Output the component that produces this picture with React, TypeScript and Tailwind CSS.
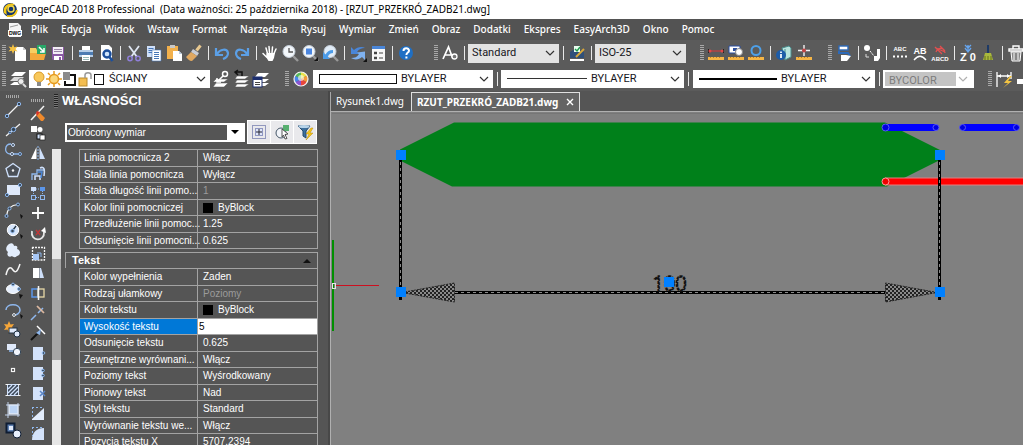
import type { ReactNode } from 'react';

const white = '#f4f4f4';
const sky = '#8fb8ee';
const ice = '#cfe0fa';

const icons: Record<string, ReactNode> = {
  new: (
    <>
      <path d="M7 4h8l3 3v11H7z" fill="#fff" />
      <path d="M15 4v3h3" fill="#c9c9c9" />
      <path d="M5 1l1.200 3.200L9.500 3.500 7.500 6l2 2.500-3.300-.7L5 11 3.800 7.800.5 8.500l2-2.500-2-2.500 3.300.7z" fill="#f6c344" />
    </>
  ),
  open: (
    <>
      <path d="M2 5h6l1 2h6v10H2z" fill="#f7cf62" />
      <path d="M2 10h16l-2 7H2z" fill="#f3a93c" />
      <rect x="9" y="2" width="9" height="9" fill="#28a869" />
      <path d="M11 4l5 5m0-4v4h-4" stroke="#fff" strokeWidth="1.500" fill="none" />
    </>
  ),
  save: (
    <>
      <path d="M4 4h12v13H5l-1-1z" fill="#8b5aa5" />
      <rect x="5" y="4" width="10" height="7" fill="#f3eef6" />
      <path d="M6 6.500h8M6 8.500h8" stroke="#9a86a8" />
      <rect x="6" y="13" width="8" height="4" fill="#fff" />
      <rect x="11" y="14" width="2" height="3" fill="#8b5aa5" />
    </>
  ),
  print: (
    <>
      <path d="M6 3h8v5H6z" fill="#fff" />
      <path d="M3 7h14v7H3z" fill="#b8cfe8" />
      <path d="M3 9h14v3H3z" fill="#4d7cb3" />
      <path d="M6 12h8v6H6z" fill="#fff" />
      <path d="M7 14.500h6M7 16.500h6" stroke="#9bb" />
    </>
  ),
  preview: (
    <>
      <path d="M5 2h8l3 3v12H5z" fill="#fff" />
      <circle cx="11" cy="11" r="3.500" fill="#cfe4fb" stroke="#1c4f9c" strokeWidth="2.400" />
      <path d="M13.500 14l3 4" stroke="#1c4f9c" strokeWidth="2.600" />
    </>
  ),
  cut: (
    <>
      <path d="M5 3l8 11M15 3L7 14" stroke="#dfe6f2" strokeWidth="1.800" />
      <circle cx="6" cy="15.500" r="2.200" fill="none" stroke="#8f7fd8" strokeWidth="1.500" />
      <circle cx="14" cy="15.500" r="2.200" fill="none" stroke="#8f7fd8" strokeWidth="1.500" />
    </>
  ),
  copy: (
    <>
      <path d="M3 3h8v11H3z" fill={ice} />
      <path d="M4.500 5.500h5M4.500 7.500h5M4.500 9.500h5" stroke="#4676b8" />
      <path d="M8 7h9v11H8z" fill="#fff" stroke="#4676b8" strokeWidth=".6" />
      <path d="M10 9.500h5M10 11.500h5M10 13.500h5M10 15.500h5" stroke="#4676b8" />
    </>
  ),
  paste: (
    <>
      <rect x="3" y="3" width="11" height="13" fill="#f2b04c" />
      <rect x="6" y="2" width="5" height="3" fill="#c9c9c9" />
      <path d="M9 8h6l3 3v7H9z" fill="#fff" />
      <path d="M15 8v3h3" fill="#b9c9dd" />
    </>
  ),
  match: (
    <>
      <path d="M16.500 2.500l-4 5" stroke="#e8c890" strokeWidth="3" />
      <path d="M9 6l6 4-2 3-6-4z" fill="#c9ccd4" />
      <path d="M7 9l6 4-5 5c-3 0-4-2-6-4z" fill="#e0a860" />
    </>
  ),
  undo: <path d="M4 5v7h7M5 11c3-5 10-6 11-1 0 3-2 5-5 6" stroke="#5b9fe6" strokeWidth="2.200" fill="none" />,
  redo: <path d="M16 5v7H9m6-1c-3-5-10-6-11-1 0 3 2 5 5 6" stroke="#5b9fe6" strokeWidth="2.200" fill="none" />,
  pan: (
    <>
      <path
        d="M6.500 14L3 10.500m4.500 0L6 5m3.500 5L9 3.500m3 6.500l.5-6M14 10.500L16 6"
        stroke="#fff"
        strokeWidth="1.500"
        strokeLinecap="round"
        fill="none"
      />
      <path d="M6.500 10h8.500l-1 5-1.500 3h-4L6 14z" fill="#fff" />
    </>
  ),
  zoomPrev: (
    <>
      <path d="M13 13l5 5" stroke="#999" strokeWidth="2.400" />
      <circle cx="9" cy="8.500" r="6" fill="#f3f7fb" stroke="#c4cdd8" />
      <path d="M9 5v4h4" stroke="#555" fill="none" strokeWidth="1.300" />
    </>
  ),
  zoomWin: (
    <>
      <path d="M13 13l5 5" stroke="#999" strokeWidth="2.400" />
      <circle cx="9" cy="8.500" r="6" fill="#f3f7fb" stroke="#c4cdd8" />
      <rect x="6" y="5.500" width="6" height="6" fill="#4b86e0" />
      <path d="M18 14v4h-4z" fill="#111" />
    </>
  ),
  zoomExt: (
    <>
      <path d="M13 13l5 5" stroke="#999" strokeWidth="2.400" />
      <circle cx="10" cy="8.500" r="6" fill="#e2edf8" stroke="#c4cdd8" />
      <path d="M3 9v7h7l-2.200-2.200C9 11 11 10 13 10V7c-4 0-6 2-7.500 4.500z" fill="#4b9be8" />
    </>
  ),
  regen: (
    <>
      <path d="M3 4l3 3c3-3 8-4 11-2-4 0-6 1-8 4l3 2H3z" fill="#4a86d8" />
      <path d="M17 17l-3-3c-3 3-8 3-11 1 4 0 6-1 8-4L9 9.500l8-1z" fill="#7fb2f0" />
      <path d="M19 15v4h-4z" fill="#111" />
    </>
  ),
  props: (
    <>
      <rect x="4" y="3" width="13" height="15" fill="#f7f7f7" />
      <rect x="4" y="3" width="13" height="3" fill="#4a86d8" />
      <path d="M6 10h3M6 15h3" stroke="#444" strokeWidth="2.400" />
      <path d="M11 10h4M11 15h4" stroke="#444" strokeWidth="1.200" />
    </>
  ),
  help: (
    <>
      <circle cx="10" cy="10" r="7" fill="#1f6fc4" />
      <path d="M7.500 8c0-3.500 5.500-3.500 5.500-.3 0 2-2.600 1.800-2.600 4.300m0 1.500v2" stroke="#fff" strokeWidth="2" fill="none" />
    </>
  ),
  textStyle: (
    <>
      <path d="M3 16L8.500 4l4.500 12M5 12h6" stroke="#fff" strokeWidth="1.700" fill="none" />
      <circle cx="14.500" cy="13.500" r="2.500" fill="#777" stroke="#fff" strokeWidth="1.300" />
    </>
  ),
  dimStyle: (
    <>
      <path d="M3 9l3-2h9l2 2v6H3z" fill="#30507a" />
      <rect x="7" y="3" width="6" height="6" fill="#e8fff0" />
      <path d="M8 6l2 2 3-4" stroke="#1f9a4c" fill="none" strokeWidth="1.400" />
      <path d="M9 14l8-8" stroke="#d9a83a" strokeWidth="2" />
      <rect x="3" y="16" width="14" height="2" fill="#fff" />
    </>
  ),
  dist: (
    <>
      <path d="M3 8h14" stroke="#c04040" strokeWidth="1.300" />
      <path d="M2.500 6v4M17.500 6v4" stroke="#222" />
      <circle cx="4" cy="8" r="1.500" fill="#e04848" />
      <circle cx="16" cy="8" r="1.500" fill="#e04848" />
      <path d="M2 14h16v3H2z" fill="#f6b545" />
      <path d="M4.500 14v1m3-1v1m3-1v1m3-1v1" stroke="#a06a10" strokeWidth=".7" />
    </>
  ),
  area: (
    <>
      <path d="M3 3h11v7H3z" fill="#fff" stroke="#2b4fa0" />
      <rect x="7" y="5" width="4" height="3" fill="#2b4fa0" />
      <circle cx="13" cy="9" r="3.500" fill="#fff" stroke="#888" />
      <path d="M2 14h16v3H2z" fill="#f6b545" />
      <path d="M4.500 14v1m3-1v1m3-1v1m3-1v1" stroke="#a06a10" strokeWidth=".7" />
    </>
  ),
  radius: (
    <>
      <circle cx="10" cy="7.500" r="4.500" fill="none" stroke="#4da0e8" strokeWidth="2" />
      <path d="M2 14h16v3H2z" fill="#f6b545" />
      <path d="M4.500 14v1m3-1v1m3-1v1m3-1v1" stroke="#a06a10" strokeWidth=".7" />
    </>
  ),
  mass: (
    <>
      <path d="M8 5l7-2 2 2v9l-6 3z" fill="#b9e4de" stroke="#4a8c8c" />
      <path d="M11 6v10" stroke="#4a8c8c" />
      <circle cx="7" cy="12" r="5" fill="#1d5ca8" />
      <path d="M7 8.500v1.500m0 1v4" stroke="#fff" strokeWidth="1.700" />
    </>
  ),
  coord: (
    <>
      <path d="M10 2v11M4 7.500h12" stroke="#f2f2f2" strokeWidth="1.400" />
      <circle cx="10" cy="7.500" r="2" fill="#c04444" />
      <path d="M2 14h16v3H2z" fill="#f6b545" />
      <path d="M4.500 14v1m3-1v1m3-1v1m3-1v1" stroke="#a06a10" strokeWidth=".7" />
    </>
  ),
  flow: (
    <>
      <rect x="5" y="3" width="9" height="4" fill="#fff" stroke="#2c69b8" strokeWidth="1.400" />
      <path d="M5 8v2h9l2 3" stroke="#2c69b8" strokeWidth="2" fill="none" />
      <path d="M7 12h5l5 1-4 5H7z" fill="#fff" />
    </>
  ),
  chain: (
    <>
      <circle cx="5" cy="5" r="3" fill="#fff" />
      <path d="M8 8l4 5" stroke="#fff" strokeDasharray="2 1" />
      <path d="M12 13h3V6h3v9l-2 3h-4z" fill="#fff" />
      <path d="M4 11v3h3" stroke="#ddd" fill="none" />
    </>
  ),
  abcDots: <path d="M3 13.500h14" stroke="#fff" strokeWidth="2" strokeDasharray="2 2" />,
  abArc: <path d="M4 17c4-5 8-5 12 0" stroke="#fff" strokeWidth="1.300" fill="none" />,
  abcd: <path d="M5 4l7 7m-2-8l5 5M6 9c2-5 8-5 9 1M6 5l9 4" stroke="#e05050" strokeWidth="1.300" fill="none" />,
  z0: <path d="M10 2v7M7 5l3 4 3-4M7 2l3 3 3-3" stroke="#66a6f0" strokeWidth="1.300" fill="none" />,
  purge: (
    <>
      <path d="M10 2v9" stroke="#1d3a66" strokeWidth="2" />
      <path d="M7 10h6l2 7H5z" fill="#a9b83c" />
      <path d="M7 17v-4m3 4v-4m3 4v-4" stroke="#64701c" />
    </>
  ),
  trash: (
    <>
      <path d="M3 6h14v2H3zM7 3h6v3H7z" fill="none" stroke="#fff" strokeWidth="1.400" />
      <path d="M5 9h10l-1 9H6z" fill="#888" stroke="#fff" />
      <path d="M8 10v7m4-7v7" stroke="#fff" />
    </>
  ),
  layers: (
    <>
      <path d="M7 3h11l-4 4H3z" fill="#fff" />
      <path d="M6 8h10l-4 4H2z" fill="#d9d9d9" />
      <path d="M6 13h8l-3 3H2z" fill="#fff" />
      <circle cx="13" cy="12.500" r="3" fill="#eee" stroke="#777" />
      <path d="M15 15l3 3" stroke="#ddd" strokeWidth="2" />
    </>
  ),
  layerPick: (
    <>
      <path d="M5 10h12l-4 3H2zM5 14h12l-4 4H2z" fill="#fff" stroke="#555" strokeWidth=".5" />
      <circle cx="14" cy="5" r="2.500" fill="none" stroke="#fff" strokeWidth="1.500" />
      <path d="M12 7l-6 6m0-4v4h4" stroke="#fff" strokeWidth="1.500" fill="none" />
    </>
  ),
  layerPrev: (
    <>
      <path d="M6 7h12l-4 3H4zM6 11h12l-4 3H4zM6 15h12l-4 3H4z" fill="#fff" stroke="#555" strokeWidth=".5" />
      <path d="M11 7V3H4m3-2L4 3l3 3" stroke="#111" strokeWidth="1.500" fill="none" />
    </>
  ),
  layerState: (
    <>
      <path d="M7 4h11l-4 4H4zM10 10h8l-4 3h-5zM10 14h8l-4 3h-5z" fill="#fff" />
      <rect x="2" y="8" width="9" height="10" fill="#fff" stroke="#1d2f70" />
      <rect x="2" y="8" width="9" height="3" fill="#1d2f70" />
      <path d="M4 13.500h5M4 15.500h5" stroke="#444" />
    </>
  ),
  wheel: (
    <>
      <path d="M10 10V3a7 7 0 016 3.500z" fill="#e9e04a" />
      <path d="M10 10l6-3.500a7 7 0 010 7z" fill="#f39a3a" />
      <path d="M10 10l6 3.500a7 7 0 01-6 3.500z" fill="#e8463c" />
      <path d="M10 10v7a7 7 0 01-6-3.500z" fill="#8a55d0" />
      <path d="M10 10l-6 3.500a7 7 0 010-7z" fill="#4a86e8" />
      <path d="M10 10L4 6.500A7 7 0 0110 3z" fill="#55b85a" />
      <circle cx="10" cy="10" r="7" fill="none" stroke="#f3f3f3" strokeWidth="1.200" />
      <circle cx="10" cy="9" r="3" fill="#fff" opacity=".6" />
    </>
  ),
  dimLinear: (
    <>
      <path d="M3 3v15M17 3v7M3 7h14" stroke="#fff" strokeWidth="1.300" />
      <path d="M4 7l3-2v4zM16 7l-3-2v4z" fill="#fff" />
      <path d="M16 7l-6 7h4l-5 5 9-7h-4l4-5z" fill="#f5c542" />
    </>
  ),
  dimNext: <path d="M3 10h14v5H3z" fill="#fff" />,
  line: (
    <>
      <path d="M4.500 15.500l11-11" stroke={white} strokeWidth="1.300" />
      <circle cx="4" cy="16" r="1.700" fill="#345" stroke={sky} />
      <circle cx="16" cy="4" r="1.700" fill="#345" stroke={sky} />
    </>
  ),
  xline: (
    <>
      <path d="M3 16L17 4" stroke={white} strokeWidth="1.200" />
      <circle cx="7" cy="12.500" r="1.200" fill="#345" stroke={sky} />
      <circle cx="10.500" cy="9.500" r="2.200" fill="#345" stroke={sky} />
    </>
  ),
  pline: (
    <>
      <path d="M8 4C1 4 1 14 7 14h10" stroke={sky} strokeWidth="1.300" fill="none" />
      <circle cx="10" cy="5" r="1.500" fill="#345" stroke={ice} />
      <circle cx="9" cy="14" r="1.500" fill="#345" stroke={ice} />
      <circle cx="17" cy="14" r="1.500" fill="#345" stroke={sky} />
    </>
  ),
  polygon: (
    <>
      <path d="M10 3.500l7 5-2.500 8h-9L3 8.500z" fill="#4a4f56" stroke={ice} strokeWidth="1.300" />
      <circle cx="10" cy="10.500" r="1.200" fill={white} />
    </>
  ),
  rect: (
    <>
      <rect x="4" y="5" width="13" height="10" fill="#dfe9fa" />
      <circle cx="4" cy="15" r="1.600" fill="#345" stroke={sky} />
      <circle cx="17" cy="5" r="1.600" fill="#345" stroke={sky} />
    </>
  ),
  arc: (
    <>
      <path d="M3.500 16C4 9 8 5 15 4.500" stroke={white} strokeWidth="1.200" fill="none" />
      <circle cx="3.500" cy="16" r="1.500" fill="#345" stroke={sky} />
      <circle cx="6.500" cy="8.500" r="1.500" fill="#345" stroke={sky} />
      <circle cx="15" cy="4.500" r="1.500" fill="#345" stroke={sky} />
      <path d="M17 14l3 2-2 3z" fill="#111" />
    </>
  ),
  circle: (
    <>
      <circle cx="10" cy="10" r="5.700" fill="#d7e6fb" stroke="#fff" />
      <path d="M10 10l3-4" stroke="#234" strokeWidth="1.300" />
      <circle cx="9.500" cy="11" r="1.800" fill="#345" stroke={sky} />
      <path d="M17 14l3 2-2 3z" fill="#111" />
    </>
  ),
  cloud: <path d="M6 4c3-2 5 0 5 2 3-1 4 1 3 3 4 1 4 6 0 7-2 2-4 1-5 0-3 2-6-1-4-4-3-2-2-6 1-8z" fill="#e3edfc" />,
  spline: <path d="M3 15c2-9 5-8 7-5s4 3 7-6" stroke={white} strokeWidth="1.500" fill="none" />,
  ellipse: (
    <>
      <ellipse cx="10" cy="9" rx="6.500" ry="4.500" fill="#e6effd" stroke="#fff" />
      <circle cx="16" cy="9" r="1.400" fill="#345" stroke={sky} />
      <circle cx="10" cy="4.500" r="1.400" fill="#345" stroke={sky} />
      <path d="M16 14l4 1-3 4z" fill="#111" />
    </>
  ),
  ellipseArc: (
    <>
      <path d="M3 10c0-7 14-7 14 0 0 3-3 5-6 5" stroke={sky} strokeWidth="1.500" fill="none" />
      <circle cx="11" cy="15" r="1.400" fill="#345" stroke={white} />
      <path d="M17 14l3 2-2 3z" fill="#111" />
    </>
  ),
  insert: (
    <>
      <path d="M6 1l1.500 3.500L11 4 9 7l2 3-3.500-.5L6 13l-1.500-3.500L1 10l2-3-2-3 3.500.5z" fill="#f5a63a" />
      <rect x="6" y="8" width="8" height="5" fill="#dfe9fa" stroke="#234" />
      <circle cx="14" cy="14" r="3" fill="#dfe9fa" stroke="#234" />
    </>
  ),
  block: (
    <>
      <rect x="4" y="4" width="9" height="6" fill="#dfe9fa" />
      <path d="M6 11h4" stroke={sky} strokeWidth="1.500" />
      <circle cx="14" cy="12" r="3.700" fill="#f1f5fc" stroke="#345" />
    </>
  ),
  point: <rect x="8.500" y="8.500" width="3" height="3" fill="#444" stroke={white} strokeWidth="1.200" />,
  hatch: (
    <>
      <rect x="4.500" y="4.500" width="11" height="11" fill="#3b4757" stroke={ice} />
      <path d="M5 9l4-4M5 13l8-8M7 15l8-8M11 15l4-4" stroke={ice} strokeWidth="1.300" />
      <path d="M2.500 4.500h3M14.500 4.500h3M2.500 15.500h3M14.500 15.500h3" stroke={white} />
    </>
  ),
  boundary: (
    <>
      <rect x="6" y="5" width="9" height="9" fill="#bcd4f5" stroke={white} />
      <path d="M5 2v16M2 15h15M15 3v14M3 5h14" stroke={ice} strokeWidth=".9" />
    </>
  ),
  region: (
    <>
      <rect x="3.500" y="3.500" width="8" height="9" fill="#5d7fb0" stroke="#0f1d33" strokeWidth="2" />
      <rect x="6" y="6" width="4" height="4" fill="#dfe9fa" />
      <circle cx="14" cy="14" r="4" fill="#e8f0fd" stroke="#0f1d33" />
    </>
  ),
  erase: (
    <>
      <path d="M3 17L16 3" stroke={white} strokeWidth="1.500" />
      <path d="M11 9l6 6-2 3h-2l-5-6z" fill="#f08a2c" />
      <path d="M9 8l3 1-3 4-1-3z" fill="#d8372a" />
    </>
  ),
  copyObj: (
    <>
      <rect x="3" y="3" width="6" height="6" fill="#fff" />
      <circle cx="12" cy="6.500" r="2.500" fill="#fff" />
      <rect x="9" y="11" width="5" height="5" fill={ice} stroke="#111" />
      <rect x="12" y="12" width="5" height="5" fill="#fff" stroke="#222" strokeWidth=".7" />
    </>
  ),
  mirror: (
    <>
      <path d="M8.500 4v12H3z" fill="#fff" />
      <path d="M11.500 4v12H17z" fill={ice} />
      <path d="M10 3v15" stroke={sky} strokeDasharray="2 1" />
    </>
  ),
  offset: (
    <>
      <path d="M4 17v-6h5V7h7" fill="none" stroke={sky} strokeWidth="1.300" />
      <path d="M7 17v-4h5v4M12 5c4-2 5 1 4 8" fill="none" stroke={ice} strokeWidth="1.600" />
      <path d="M10 9h4l-1 6" stroke="#4a86d8" strokeWidth="1.500" fill="none" />
    </>
  ),
  array: (
    <>
      <rect x="3" y="4" width="5" height="4" fill={ice} />
      <rect x="12" y="4" width="5" height="4" fill="#5b96ea" />
      <rect x="3.500" y="12.500" width="4" height="4" fill="none" stroke={sky} />
      <rect x="12.500" y="12.500" width="4" height="4" fill="none" stroke={sky} />
      <path d="M5.500 8v4M14.500 8v4M8 6h4M8 14.500h4" stroke={sky} strokeDasharray="1 1" />
    </>
  ),
  move: <path d="M10 4v12M4 10h12" stroke="#fff" strokeWidth="1.800" />,
  rotate: (
    <>
      <path d="M4 8c-2 11 13 11 12 1" fill="none" stroke="#e6e6e6" strokeWidth="1.800" />
      <path d="M13 8l4-4 1 6z" fill="#fff" />
      <path d="M8 7l4 5m0-5l-4 5" stroke="#c03838" strokeWidth="1.300" />
    </>
  ),
  scale: (
    <>
      <path d="M4 4.500h12.500V17" fill="none" stroke={white} strokeDasharray="2 1" strokeWidth="1.300" />
      <path d="M4.500 4v13H17" fill="none" stroke={white} strokeDasharray="2 1" strokeWidth="1.300" />
      <rect x="5" y="11" width="6" height="6" fill="#a8c8f6" />
      <path d="M9 10h4v4" fill="none" stroke={sky} />
    </>
  ),
  stretch: (
    <>
      <rect x="5" y="5" width="6" height="10" fill="#fff" />
      <path d="M11.500 5h1.500l3 10h-4.500z" fill={ice} />
    </>
  ),
  stretch2: (
    <>
      <rect x="4" y="6" width="6" height="8" fill="none" stroke="#5b96ea" strokeWidth="1.500" />
      <rect x="10" y="6" width="6" height="8" fill="none" stroke="#e8d9a8" strokeWidth="1.300" />
      <path d="M10.500 3v14" stroke={white} strokeWidth="1.500" />
    </>
  ),
  trim: (
    <>
      <path d="M3 17l5-5m2-2l5-5" stroke={sky} strokeWidth="1.500" />
      <path d="M9 3l7 7" stroke="#dcb8a0" strokeWidth="1.700" />
    </>
  ),
  extend: (
    <>
      <path d="M3 17l9-9" stroke="#111" strokeWidth="2" />
      <path d="M9 3l8 8" stroke="#fff" strokeWidth="1.500" />
      <path d="M8 10l5-4-1 6" fill={sky} />
    </>
  ),
  break1: (
    <>
      <path d="M5 4h10v13H5z" fill="#d3e2fa" />
      <circle cx="15.500" cy="10" r="1.300" fill="#345" stroke={sky} />
    </>
  ),
  break2: (
    <>
      <path d="M5 4h10v13H5z" fill="#d3e2fa" />
      <circle cx="15" cy="7.500" r="1.300" fill="#345" stroke={sky} />
      <circle cx="15" cy="12.500" r="1.300" fill="#345" stroke={sky} />
    </>
  ),
  join: (
    <>
      <path d="M5 4h10v13H5z" fill="#d3e2fa" />
      <path d="M12 8l5 5m0-5l-5 5" stroke="#5b86c8" strokeWidth="1.500" />
    </>
  ),
  chamfer: (
    <>
      <path d="M4 16L16 5v12H4z" fill="#e2ecfc" />
      <path d="M4 4.500h12M4.500 4v12" stroke={sky} strokeDasharray="2 2" />
    </>
  ),
  fillet: (
    <>
      <path d="M4 17C4 9 9 5 16 5v12z" fill="#d3e2fa" />
      <path d="M4 4.500h12M4.500 4v9" stroke={sky} strokeDasharray="2 2" />
    </>
  ),
};

function Icon({ name, label }: { name: string; label?: string }) {
  return (
    <svg viewBox="0 0 20 20" className="size-5 shrink-0" aria-hidden="true">
      {icons[name]}
      {label && (
        <text
          x="10"
          y={name === 'abcDots' ? 8 : name === 'abArc' ? 11 : 18}
          textAnchor="middle"
          fill="#fff"
          fontFamily="Liberation Sans, sans-serif"
          fontWeight="bold"
          fontSize={name === 'abArc' ? 9 : name === 'z0' ? 11 : 6}
        >
          {label}
        </text>
      )}
    </svg>
  );
}

function Tool({ name, title, label }: { name: string; title: string; label?: string }) {
  return (
    <button type="button" title={title} aria-label={title} className="flex size-5 shrink-0 items-center justify-center hover:bg-white/20">
      <Icon name={name} label={label} />
    </button>
  );
}

function Sep() {
  return (
    <div className="flex w-2 shrink-0 justify-center">
      <div className="h-3.5 w-px bg-[#e8e8e8]" />
    </div>
  );
}

function Grip() {
  return (
    <div className="flex w-2 shrink-0 justify-center">
      <div className="h-4 w-1 bg-[repeating-linear-gradient(to_bottom,#a8a8a8_0px,#a8a8a8_1px,transparent_1px,transparent_2px)]" />
    </div>
  );
}

function HGrip() {
  return (
    <div className="h-[3px] w-3.5 shrink-0 bg-[repeating-linear-gradient(to_right,#a8a8a8_0px,#a8a8a8_1px,transparent_1px,transparent_2px)]" />
  );
}

function Combo({ label, value, className, sample, muted }: { label: string; value: string; className: string; sample?: ReactNode; muted?: boolean }) {
  return (
    <label className={`relative flex shrink-0 items-center ${className}`}>
      {sample}
      <select
        aria-label={label}
        disabled={muted}
        className={`h-full min-w-0 flex-1 appearance-none bg-transparent pt-px pr-5 pl-1 font-['Roboto',sans-serif] text-[11px] outline-none ${muted ? 'text-[#7c7c7c]' : 'text-[#16161c]'}`}
      >
        <option>{value}</option>
      </select>
      <svg viewBox="0 0 10 6" className={`pointer-events-none absolute right-1 h-1.5 w-2.5 ${muted ? 'text-[#b0b0b0]' : 'text-[#333]'}`}>
        <path d="M1 1l4 4 4-4" fill="none" stroke="currentColor" strokeWidth="1.200" />
      </svg>
    </label>
  );
}

const menus = ['Plik', 'Edycja', 'Widok', 'Wstaw', 'Format', 'Narzędzia', 'Rysuj', 'Wymiar', 'Zmień', 'Obraz', 'Dodatki', 'Ekspres', 'EasyArch3D', 'Okno', 'Pomoc'];

const drawTools: [string, string][] = [
  ['line', 'Linia'], ['xline', 'Prosta'], ['pline', 'Polilinia'], ['polygon', 'Wielobok'], ['rect', 'Prostokąt'], ['arc', 'Łuk'],
  ['circle', 'Okrąg'], ['cloud', 'Chmurka'], ['spline', 'Splajn'], ['ellipse', 'Elipsa'], ['ellipseArc', 'Łuk eliptyczny'],
  ['insert', 'Wstaw blok'], ['block', 'Utwórz blok'], ['point', 'Punkt'], ['hatch', 'Kreskowanie'], ['boundary', 'Obwiednia'], ['region', 'Region'],
];

const editTools: [string, string][] = [
  ['erase', 'Wymaż'], ['copyObj', 'Kopiuj'], ['mirror', 'Lustro'], ['offset', 'Odsuń'], ['array', 'Szyk'], ['move', 'Przesuń'],
  ['rotate', 'Obróć'], ['scale', 'Skaluj'], ['stretch', 'Rozciągnij'], ['stretch2', 'Wydłuż'], ['trim', 'Utnij'], ['extend', 'Przedłuż'],
  ['break1', 'Przerwij w punkcie'], ['break2', 'Przerwij'], ['join', 'Połącz'], ['chamfer', 'Fazuj'], ['fillet', 'Zaokrąglij'],
];

type Prop = { name: string; value: string; muted?: boolean; swatch?: boolean; editing?: boolean };

const lineProps: Prop[] = [
  { name: 'Linia pomocnicza 2', value: 'Włącz' },
  { name: 'Stała linia pomocnicza', value: 'Wyłącz' },
  { name: 'Stała długość linii pomo...', value: '1', muted: true },
  { name: 'Kolor linii pomocniczej', value: 'ByBlock', swatch: true },
  { name: 'Przedłużenie linii pomoc...', value: '1.25' },
  { name: 'Odsunięcie linii pomocni...', value: '0.625' },
];

const textProps: Prop[] = [
  { name: 'Kolor wypełnienia', value: 'Zaden' },
  { name: 'Rodzaj ułamkowy', value: 'Poziomy', muted: true },
  { name: 'Kolor tekstu', value: 'ByBlock', swatch: true },
  { name: 'Wysokość tekstu', value: '5', editing: true },
  { name: 'Odsunięcie tekstu', value: '0.625' },
  { name: 'Zewnętrzne wyrównani...', value: 'Włącz' },
  { name: 'Poziomy tekst', value: 'Wyśrodkowany' },
  { name: 'Pionowy tekst', value: 'Nad' },
  { name: 'Styl tekstu', value: 'Standard' },
  { name: 'Wyrównanie tekstu we...', value: 'Włącz' },
  { name: 'Pozycja tekstu X', value: '5707.2394' },
];

function PropTable({ rows }: { rows: Prop[] }) {
  return (
    <table className="ml-3.5 w-[239px] table-fixed border-separate border-spacing-0 border-x border-b border-[#a3a3a3] text-[10px] leading-[14px]">
      <colgroup>
        <col className="w-[118px]" />
        <col />
      </colgroup>
      <tbody>
        {rows.map((row) => (
          <tr key={row.name} className="h-4 odd:h-[17px]">
            <th scope="row" className={`border-t border-r border-[#a3a3a3] p-0 pl-1 text-left font-normal whitespace-nowrap ${row.editing ? 'bg-[#0078d7]' : ''}`}>
              {row.name}
            </th>
            <td className={`border-t border-[#a3a3a3] p-0 whitespace-nowrap ${row.editing ? 'bg-white' : 'pl-[5px]'} ${row.muted ? 'text-[#9b9b9b]' : ''}`}>
              {row.editing ? (
                <input aria-label={row.name} defaultValue={row.value} className="block h-[14px] w-full bg-white pl-px text-black outline-none" />
              ) : (
                <span className="flex items-center gap-[5px]">
                  {row.swatch && <span className="size-2.5 bg-black" />}
                  {row.value}
                </span>
              )}
            </td>
          </tr>
        ))}
      </tbody>
    </table>
  );
}

function Handle({ x, y }: { x: number; y: number }) {
  return <rect x={x - 5} y={y - 5} width="10" height="10" fill="#0080ff" />;
}

function Drawing() {
  return (
    <svg className="min-h-0 w-full flex-1 bg-[#808080]" role="img" aria-label="Rysunek">
      <defs>
        <pattern id="mesh" width="4" height="4" patternUnits="userSpaceOnUse">
          <rect width="4" height="4" fill="#222" />
          <rect width="2" height="2" fill="#8a8a8a" />
          <rect x="2" y="2" width="2" height="2" fill="#8a8a8a" />
        </pattern>
      </defs>
      <g transform="translate(-331 -112)">
        <path d="M332 113.500H3000" stroke="#767676" />
        <path d="M400 149.500L454 122.500H885L940 150V160L887 186.500H452L400 160.500Z" fill="#00801a" />
        <g stroke="#0000ff" strokeWidth="7">
          <path d="M885 127.500H936M962 127.500H1017" />
        </g>
        <path d="M885 181.500H3000" stroke="#e08080" strokeWidth="8" />
        <path d="M885 181.500H3000" stroke="#ff0000" strokeWidth="6" />
        <g fill="#0000e0" stroke="#5a5af0" strokeWidth="1">
          <circle cx="885.500" cy="127.500" r="3.500" />
          <circle cx="936" cy="127.500" r="3" />
          <circle cx="962.500" cy="127.500" r="3" />
          <circle cx="1016.500" cy="127.500" r="3" />
        </g>
        <circle cx="885.500" cy="181.500" r="3.500" fill="#f00000" stroke="#ff9a9a" />
        <g stroke="#000" strokeWidth="3">
          <path d="M400.500 155V300M939.500 155V300M455 292.500H885" />
        </g>
        <g stroke="#8a8a8a" strokeWidth="1" strokeDasharray="3 3">
          <path d="M400.500 162V300M939.500 162V300M455 292.500H885" />
        </g>
        <path d="M402 292.500L454.500 283V302Z" fill="url(#mesh)" stroke="#222" strokeDasharray="2 1" />
        <path d="M937 292.500L885.500 283V302Z" fill="url(#mesh)" stroke="#222" strokeDasharray="2 1" />
        <text x="669.500" y="291" textAnchor="middle" fontFamily="Open Sans, sans-serif" fontSize="20" fontWeight="300" fill="none" stroke="#111" strokeWidth="1.500" strokeDasharray="3 1">
          100
        </text>
        <Handle x={401} y={155} />
        <Handle x={401} y={292} />
        <Handle x={940} y={155} />
        <Handle x={940} y={292} />
        <Handle x={669} y={282} />
        <path d="M333 240V331" stroke="#009000" strokeWidth="2" />
        <path d="M336 285.500H379" stroke="#cc1020" />
        <rect x="332.500" y="283.500" width="3" height="5" fill="none" stroke="#e8e8e8" />
      </g>
    </svg>
  );
}

export default function App() {
  return (
    <div className="flex h-screen flex-col overflow-hidden bg-[#535353] font-['Noto_Sans',sans-serif] text-white select-none">
      <header className="flex h-[19px] shrink-0 items-center gap-[3px] bg-white pl-0.5 text-black">
        <svg viewBox="0 0 16 16" className="size-4 shrink-0" aria-hidden="true">
          <circle cx="8" cy="8" r="7" fill="#15356b" />
          <path d="M2 11C0 4 8-1 13 3l-3 1C6 3 3 7 5 13z" fill="#f3c614" />
          <circle cx="9" cy="7" r="3" fill="none" stroke="#f3d84a" strokeWidth="1.500" />
          <path d="M5 14c6 1 9-2 10-6" stroke="#f3c614" strokeWidth="1.800" fill="none" />
        </svg>
        <h1 className="truncate text-[10px] whitespace-pre">
          {'progeCAD 2018 Professional  (Data ważności: 25 października 2018) - [RZUT_PRZEKRÓ_ZADB21.dwg]'}
        </h1>
      </header>

      <nav className="flex h-[21px] shrink-0 items-center bg-[#535353] pl-2">
        <svg viewBox="0 0 14 14" className="size-3.5 shrink-0" aria-hidden="true">
          <path d="M1 0h9l3 3v11H1z" fill="#f4f4f4" />
          <path d="M2 4l8-2" stroke="#999" />
          <rect y="7" width="14" height="6" fill="#fff" />
          <text x="7" y="12" textAnchor="middle" fontSize="5" fontWeight="bold" fontFamily="Liberation Sans, sans-serif">DWG</text>
        </svg>
        <ul className="ml-[9px] flex gap-[13px] text-[10px] font-medium">
          {menus.map((m) => (
            <li key={m}>
              <button type="button">{m}</button>
            </li>
          ))}
        </ul>
      </nav>

      <div className="flex h-[26px] shrink-0 items-center bg-[#5b5b5b]">
        <Grip />
        <Tool name="new" title="Nowy" />
        <Tool name="open" title="Otwórz" />
        <Tool name="save" title="Zapisz" />
        <Sep />
        <Tool name="print" title="Drukuj" />
        <Tool name="preview" title="Podgląd wydruku" />
        <Sep />
        <Tool name="cut" title="Wytnij" />
        <Tool name="copy" title="Kopiuj do schowka" />
        <Tool name="paste" title="Wklej" />
        <Tool name="match" title="Uzgodnij właściwości" />
        <Sep />
        <Tool name="undo" title="Cofnij" />
        <Tool name="redo" title="Ponów" />
        <Sep />
        <Tool name="pan" title="Przesuń widok" />
        <Tool name="zoomPrev" title="Poprzedni zoom" />
        <Tool name="zoomWin" title="Zoom okno" />
        <Tool name="zoomExt" title="Zoom zakres" />
        <Sep />
        <Tool name="regen" title="Regeneruj" />
        <Tool name="props" title="Własności" />
        <Sep />
        <Tool name="help" title="Pomoc" />
        <div className="w-4 shrink-0" />
        <Grip />
        <Tool name="textStyle" title="Styl tekstu" />
        <Sep />
        <Combo label="Styl tekstu" value="Standard" className="h-[19px] w-[91px] bg-[#e3e3e3]" />
        <Sep />
        <Tool name="dimStyle" title="Styl wymiarowania" />
        <Sep />
        <Combo label="Styl wymiarowania" value="ISO-25" className="h-[19px] w-[91px] bg-[#e3e3e3]" />
        <div className="w-3 shrink-0" />
        <Grip />
        <Tool name="dist" title="Odległość" />
        <Tool name="area" title="Pole" />
        <Tool name="radius" title="Promień" />
        <Sep />
        <Tool name="mass" title="Parametry masy" />
        <Tool name="coord" title="Współrzędne" />
        <div className="w-3 shrink-0" />
        <Grip />
        <Tool name="flow" title="Kolejność" />
        <Sep />
        <Tool name="chain" title="Połącz obiekty" />
        <Sep />
        <Tool name="abcDots" title="Dopasuj tekst" label="ABC" />
        <Tool name="abArc" title="Tekst na łuku" label="AB" />
        <Tool name="abcd" title="Rozbij tekst" label="ABCD" />
        <Sep />
        <Tool name="z0" title="Spłaszcz" label="Z 0" />
        <Tool name="purge" title="Wyczyść" />
        <Sep />
        <Tool name="trash" title="Usuń" />
      </div>

      <div className="flex h-[25px] shrink-0 items-center bg-[#5b5b5b]">
        <Grip />
        <Tool name="layers" title="Warstwy" />
        <Combo
          label="Warstwa"
          value="ŚCIANY"
          className="ml-px h-[18px] w-[181px] bg-white"
          sample={
            <svg viewBox="0 0 76 18" className="h-[18px] w-[76px] shrink-0" aria-hidden="true">
              <circle cx="10" cy="7" r="5" fill="#f8c85a" stroke="#d99a28" />
              <path d="M8 12h4v4H8z" fill="#8a8a8a" />
              <circle cx="25" cy="9" r="4.500" fill="#fbd77a" stroke="#e69a1e" strokeWidth="1.500" />
              <path d="M25 1v3M25 14v3M17 9h3M30 9h3M19 3l2 2M29 13l2 2M19 15l2-2M29 5l2-2" stroke="#e69a1e" strokeWidth="1.500" />
              <rect x="34" y="2" width="7" height="8" fill="#8a8a8a" />
              <path d="M41 5h5v10H36v-4" fill="none" stroke="#111" strokeWidth="2" />
              <rect x="50" y="8" width="8" height="8" fill="#f3bd50" stroke="#b98a2c" />
              <path d="M56 8V5c0-3 6-3 6 0v4" fill="none" stroke="#999" strokeWidth="1.500" />
              <rect x="65.500" y="4.500" width="9" height="10" fill="#fff" stroke="#111" />
            </svg>
          }
        />
        <div className="w-px shrink-0" />
        <Tool name="layerPick" title="Ustaw warstwę obiektu" />
        <Tool name="layerPrev" title="Poprzednia warstwa" />
        <Tool name="layerState" title="Stany warstw" />
        <div className="w-3 shrink-0" />
        <Grip />
        <Tool name="wheel" title="Paleta kolorów" />
        <Combo
          label="Kolor"
          value="BYLAYER"
          className="ml-0.5 h-[18px] w-[180px] bg-white"
          sample={<span className="ml-1.5 h-2.5 w-[78px] shrink-0 border border-[#111]" />}
        />
        <Sep />
        <Combo
          label="Rodzaj linii"
          value="BYLAYER"
          className="h-[18px] w-[183px] bg-white"
          sample={<span className="ml-1.5 h-px w-20 shrink-0 bg-[#333]" />}
        />
        <Sep />
        <Combo
          label="Grubość linii"
          value="BYLAYER"
          className="ml-px h-[18px] w-[182px] bg-white"
          sample={<span className="ml-1.5 h-0.5 w-[78px] shrink-0 bg-black" />}
        />
        <Sep />
        <div className="shrink-0 bg-white p-0.5">
          <Combo label="Styl wydruku" value="BYCOLOR" muted className="h-[14px] w-[87px] bg-[linear-gradient(to_right,#c4c4c4_71px,white_71px)]" />
        </div>
        <div className="w-3 shrink-0" />
        <Grip />
        <Tool name="dimLinear" title="Wymiar liniowy" />
        <Tool name="dimNext" title="Wymiar bazowy" />
      </div>

      <main className="flex min-h-0 flex-1 bg-[#555]">
        <div className="flex w-[26px] shrink-0 flex-col items-center overflow-hidden pt-1">
          <HGrip />
          <div className="mt-0.5 flex flex-col">
            {drawTools.map(([n, t]) => <Tool key={n} name={n} title={t} />)}
          </div>
        </div>
        <div className="flex w-6 shrink-0 flex-col items-center overflow-hidden pt-2">
          <HGrip />
          <div className="mt-px flex flex-col">
            {editTools.map(([n, t]) => <Tool key={n} name={n} title={t} />)}
          </div>
        </div>

        <aside className="flex w-[278px] shrink-0 flex-col overflow-hidden font-['Liberation_Sans',sans-serif]">
          <div className="flex h-5 shrink-0 items-center gap-1 pl-1">
            <div className="h-3.5 w-1 bg-[repeating-linear-gradient(to_bottom,#222_0px,#222_1px,#777_1px,#777_2px)]" />
            <h2 className="text-[13px] font-bold">WŁASNOŚCI</h2>
          </div>
          <div className="mt-[9px] flex h-6 shrink-0 items-center gap-0.5 pl-[15px]">
            <label className="relative flex h-[19px] w-[180px] items-center border-2 border-white">
              <select aria-label="Typ obiektu" className="h-full w-full appearance-none bg-[#555] pl-px text-[10px] text-white outline-none">
                <option>Obrócony wymiar</option>
              </select>
              <span className="pointer-events-none absolute inset-y-0 right-0 flex w-4 items-center justify-center bg-white">
                <svg viewBox="0 0 8 4" className="h-1 w-2"><path d="M0 0h8L4 4z" fill="#000" /></svg>
              </span>
            </label>
            <div className="flex h-6 gap-px bg-white p-px">
              <button type="button" aria-label="Wybierz obiekty" className="bg-[#e9e9ec] px-px">
                <svg viewBox="0 0 20 20" className="size-5">
                  <rect x="3.500" y="3.500" width="13" height="13" fill="none" stroke="#3a4690" strokeDasharray="1 1" />
                  <rect x="6.500" y="6.500" width="7" height="7" fill="#dfe6fa" stroke="#3a4690" strokeDasharray="1 1" />
                  <path d="M10 7v6M7 10h6" stroke="#223" />
                </svg>
              </button>
              <button type="button" aria-label="Szybki wybór" className="bg-[#e9e9ec] px-px">
                <svg viewBox="0 0 20 20" className="size-5">
                  <circle cx="9" cy="11" r="5" fill="#f2f5fa" stroke="#456" />
                  <path d="M11 3h6v6h-6z" fill="#58b070" />
                  <path d="M10 7l6 5-3 .5 2 4-2 .5-1.500-4L10 15z" fill="#fff" stroke="#333" strokeWidth=".8" />
                </svg>
              </button>
              <button type="button" aria-label="Filtr" className="bg-[#e9e9ec] px-px">
                <svg viewBox="0 0 20 20" className="size-5">
                  <path d="M3 4h12l-4 5v7l-3-2V9z" fill="#3d6f9c" stroke="#234a6e" />
                  <ellipse cx="9" cy="4.500" rx="5.500" ry="1.500" fill="#b8d4ea" />
                  <path d="M16 6l-5 6h3l-3 6 7-7h-3l3-5z" fill="#f5c518" stroke="#b98a10" strokeWidth=".5" />
                </svg>
              </button>
            </div>
          </div>
          <div className="mt-[5px] flex min-h-0 flex-1">
            <div className="ml-0.5 flex w-[9px] shrink-0 flex-col bg-[#e6e6e6]">
              <div className="mt-[110px] h-[101px] bg-[#a6a6a6]" />
            </div>
            <div className="ml-1 w-[253px] shrink-0">
              <PropTable rows={lineProps} />
              <button type="button" className="mt-[3px] flex h-4 w-full items-center justify-between border border-b-0 border-[#a3a3a3] px-1.5 text-[11px] leading-none font-bold">
                Tekst
                <svg viewBox="0 0 8 4" className="h-1 w-2"><path d="M0 4h8L4 0z" fill="#111" /></svg>
              </button>
              <PropTable rows={textProps} />
            </div>
          </div>
        </aside>

        <section className="flex min-w-0 flex-1 flex-col border-l-2 border-[#484848]">
          <div className="flex h-5 shrink-0 items-end text-[10px]" role="tablist">
            <button type="button" role="tab" className="flex h-[19px] items-center border-l border-[#a8a8a8] px-[5px]">Rysunek1.dwg</button>
            <div role="tab" aria-selected="true" className="ml-0.5 flex h-[19px] items-center gap-2 border border-b-0 border-[#e0e0e0] bg-[#646464] px-[5px] font-bold">
              RZUT_PRZEKRÓ_ZADB21.dwg
              <button type="button" aria-label="Zamknij">
                <svg viewBox="0 0 8 8" className="size-2"><path d="M1 1l6 6M7 1L1 7" stroke="#fff" strokeWidth="1.400" /></svg>
              </button>
            </div>
          </div>
          <div className="flex min-h-0 flex-1 border-t border-l border-[#b0b0b0]">
            <Drawing />
          </div>
        </section>
      </main>
    </div>
  );
}
